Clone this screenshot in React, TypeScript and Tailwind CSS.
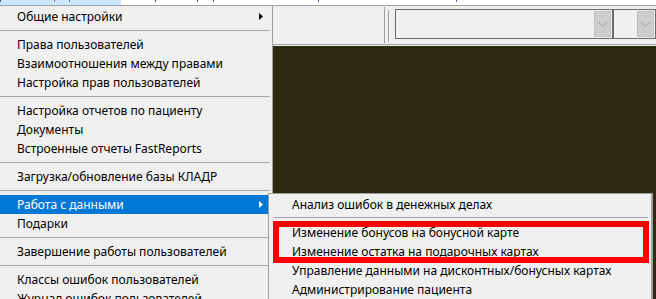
import React from 'react';

type Item = { label?: string; sep?: boolean; arrow?: boolean; active?: boolean };

const mainItems: Item[] = [
  { label: 'Общие настройки', arrow: true },
  { sep: true },
  { label: 'Права пользователей' },
  { label: 'Взаимоотношения между правами' },
  { label: 'Настройка прав пользователей' },
  { sep: true },
  { label: 'Настройка отчетов по пациенту' },
  { label: 'Документы' },
  { label: 'Встроенные отчеты FastReports' },
  { sep: true },
  { label: 'Загрузка/обновление базы КЛАДР' },
  { sep: true },
  { label: 'Работа с данными', arrow: true, active: true },
  { label: 'Подарки' },
  { sep: true },
  { label: 'Завершение работы пользователей' },
  { sep: true },
  { label: 'Классы ошибок пользователей' },
  { label: 'Журнал ошибок пользователей' },
];

const subItems: Item[] = [
  { label: 'Анализ ошибок в денежных делах' },
  { sep: true },
  { label: 'Изменение бонусов на бонусной карте' },
  { label: 'Изменение остатка на подарочных картах' },
  { label: 'Управление данными на дисконтных/бонусных картах' },
  { label: 'Администрирование пациента' },
];

const Arrow = ({ white }: { white?: boolean }) => (
  <svg width="4" height="7" viewBox="0 0 4 7" className="shrink-0">
    <polygon points="0,0 4,3.5 0,7" fill={white ? '#ffffff' : '#000000'} />
  </svg>
);

const Chevron = () => (
  <svg width="9" height="5" viewBox="0 0 9 5">
    <path d="M0.5 0.5 L4.5 4.5 L8.5 0.5" fill="none" stroke="#a0a0a0" strokeWidth="1" />
  </svg>
);

const Combo = ({ width }: { width: string }) => (
  <div className={`${width} h-[30px] shrink-0 border border-[#6a6a6a] bg-[#f0f0f0] flex justify-end p-px`}>
    <div className="w-[17px] h-full bg-[#cdcdcd] border border-[#c2c2c2] flex items-center justify-center">
      <Chevron />
    </div>
  </div>
);

export default function App() {
  return (
    <div className="relative w-[656px] h-[299px] overflow-hidden bg-[#f0f0f0] font-['Noto_Sans',sans-serif] text-[12px] text-black leading-none">
      {/* menubar strip, mostly cut off */}
      <div className="h-[5px] bg-white flex">
        <div className="w-[121px] h-full bg-[#cce8ff] flex">
          <span className="w-px h-[2px] bg-[#555]" />
          <span className="ml-[53px] w-px h-[2px] bg-[#b07a30]" />
          <span className="ml-[14px] w-px h-[2px] bg-[#5070c0]" />
        </div>
        <span className="ml-[34px] w-px h-[2px] bg-[#803090]" />
        <span className="ml-[41px] w-px h-[2px] bg-[#555]" />
        <span className="ml-[15px] w-px h-[2px] bg-[#5070c0]" />
        <span className="ml-[104px] w-px h-[2px] bg-[#803090]" />
        <span className="ml-[137px] w-px h-[2px] bg-[#5070c0]" />
      </div>

      {/* toolbar */}
      <div className="h-[40px] border-t border-b border-[#a0a0a0] flex items-start">
        <div className="w-[384px] shrink-0" />
        <div className="w-px h-[36px] mt-px bg-[#a0a0a0]" />
        <div className="ml-[3px] mt-[4px] w-[2px] h-[32px] border-l border-b border-[#a0a0a0] bg-white" />
        <div className="ml-[6px] mt-[3px] flex">
          <Combo width="w-[218px]" />
          <Combo width="w-[43px]" />
        </div>
      </div>
      <div className="h-px bg-[#f0f0f0]" />
      <div className="h-[260px] bg-[#2d2a10]" />

      {/* main popup menu */}
      <div className="absolute left-0 top-[5px] w-[273px] h-[300px] bg-[#f0f0f0] border-t border-r border-[#a0a0a0] pt-px">
        {mainItems.map((it, i) =>
          it.sep ? (
            <div key={i} className="h-[9px] pt-[4px] pr-[2px]">
              <div className="h-px bg-[#a7a7a7]" />
            </div>
          ) : (
            <div
              key={i}
              className={`h-[19px] mr-px pl-[17px] pr-[8px] flex items-center justify-between whitespace-nowrap ${
                it.active ? 'bg-[#0078d7] text-white' : ''
              }`}
            >
              <span>{it.label}</span>
              {it.arrow && <Arrow white={it.active} />}
            </div>
          )
        )}
      </div>

      {/* submenu */}
      <div className="absolute left-[268px] top-[193px] w-[385px] h-[120px] bg-[#f0f0f0] border-l border-t border-r-2 border-[#a0a0a0] pt-px">
        {subItems.map((it, i) =>
          it.sep ? (
            <div key={i} className="h-[9px] pt-[3px] ml-[4px] mr-[3px]">
              <div className="h-px bg-[#a7a7a7]" />
            </div>
          ) : (
            <div key={i} className="h-[19px] pl-[23px] flex items-center whitespace-nowrap">
              <span>{it.label}</span>
            </div>
          )
        )}
        <div className="absolute left-[4px] top-[27px] w-[376px] h-[42px] border-[6px] border-[#ff0000]" />
      </div>
    </div>
  );
}
